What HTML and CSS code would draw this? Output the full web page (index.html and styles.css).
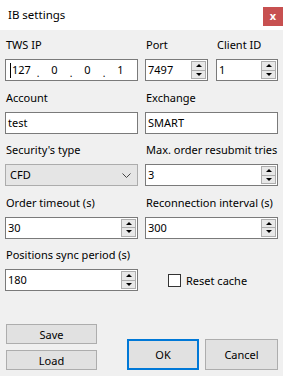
FILE: index.html
```html
<!DOCTYPE html>
<html>
<head>
<meta charset="utf-8">
<link rel="stylesheet" href="styles.css">
</head>
<body>
<div class="window">
  <div class="titlebar">
    <span class="title">IB settings</span>
    <div class="close">x</div>
  </div>
  <div class="form">
    <div class="field">
      <div class="label">TWS IP</div>
      <div class="box ip">
        <span class="caret"></span>
        <span class="oct o1">127</span><span class="dot">.</span>
        <span class="oct">0</span><span class="dot">.</span>
        <span class="oct">0</span><span class="dot">.</span>
        <span class="oct">1</span>
      </div>
    </div>
    <div class="split">
      <div class="field">
        <div class="label">Port</div>
        <div class="box spin"><span class="val">7497</span><span class="spinner"><span class="up"></span><span class="down"></span></span></div>
      </div>
      <div class="field">
        <div class="label">Client ID</div>
        <div class="box spin"><span class="val">1</span><span class="spinner"><span class="up"></span><span class="down"></span></span></div>
      </div>
    </div>
    <div class="field">
      <div class="label">Account</div>
      <div class="box"><span class="val">test</span></div>
    </div>
    <div class="field">
      <div class="label">Exchange</div>
      <div class="box"><span class="val">SMART</span></div>
    </div>
    <div class="field">
      <div class="label">Security's type</div>
      <div class="box select"><span class="val">CFD</span>
        <svg class="chev" width="9" height="5" viewBox="0 0 9 5"><path d="M0.5 0.5 L4.5 4.5 L8.5 0.5" fill="none" stroke="#444" stroke-width="1"/></svg>
      </div>
    </div>
    <div class="field">
      <div class="label">Max. order resubmit tries</div>
      <div class="box spin"><span class="val">3</span><span class="spinner"><span class="up"></span><span class="down"></span></span></div>
    </div>
    <div class="field">
      <div class="label">Order timeout (s)</div>
      <div class="box spin"><span class="val">30</span><span class="spinner"><span class="up"></span><span class="down"></span></span></div>
    </div>
    <div class="field">
      <div class="label">Reconnection interval (s)</div>
      <div class="box spin"><span class="val">300</span><span class="spinner"><span class="up"></span><span class="down"></span></span></div>
    </div>
    <div class="field">
      <div class="label">Positions sync period (s)</div>
      <div class="box spin"><span class="val">180</span><span class="spinner"><span class="up"></span><span class="down"></span></span></div>
    </div>
    <div class="check-cell">
      <span class="checkbox"></span><span class="check-label">Reset cache</span>
    </div>
  </div>
  <div class="footer">
    <div class="left-buttons">
      <div class="btn small">Save</div>
      <div class="btn small">Load</div>
    </div>
    <div class="right-buttons">
      <div class="btn big ok">OK</div>
      <div class="btn big">Cancel</div>
    </div>
  </div>
</div>
</body>
</html>
```
FILE: styles.css
```css
html, body {
  margin: 0;
  padding: 0;
}
body {
  width: 283px;
  height: 376px;
  background: #f0f0f0;
  font-family: "Noto Sans", "Open Sans", sans-serif;
  font-size: 11px;
  color: #000;
  overflow: hidden;
}
.window {
  display: flex;
  flex-direction: column;
  height: 376px;
}
.titlebar {
  height: 30px;
  background: #fff;
  display: flex;
  align-items: flex-start;
  justify-content: space-between;
}
.title {
  margin: 7px 0 0 8px;
  font-size: 11.5px;
  line-height: 16px;
}
.close {
  margin-top: 7px;
  width: 20px;
  height: 19px;
  background: #c75050;
  color: #fff;
  font-weight: bold;
  font-size: 11px;
  line-height: 18px;
  text-align: center;
}
.form {
  display: grid;
  grid-template-columns: 133px 133px;
  column-gap: 7px;
  row-gap: 8.5px;
  padding: 7px 5px 0 5px;
}
.split {
  display: grid;
  grid-template-columns: 63px 62px;
  column-gap: 8px;
}
.label {
  height: 16px;
  line-height: 16px;
  margin: 0 0 6px 1px;
  white-space: nowrap;
}
.box {
  box-sizing: border-box;
  height: 22px;
  border: 1px solid #7a7a7a;
  background: #fff;
  display: flex;
  align-items: center;
  position: relative;
}
.val {
  padding-left: 2px;
  line-height: 16px;
}
.ip {
  padding-left: 4px;
}
.caret {
  width: 1px;
  height: 15px;
  background: #000;
  margin-right: 1px;
}
.oct {
  display: inline-block;
  width: 17px;
  text-align: center;
  line-height: 16px;
}
.oct.o1 {
  width: 18px;
  text-align: left;
}
.dot {
  display: inline-block;
  width: 16px;
  text-align: center;
  line-height: 16px;
  position: relative;
  top: 3px;
  font-size: 10px;
}
.spin .spinner {
  position: absolute;
  right: 1px;
  top: 1px;
  bottom: 1px;
  width: 15px;
  display: flex;
  flex-direction: column;
}
.spinner span {
  flex: 1;
  box-sizing: border-box;
  background: #e8e8e8;
  border: 1px solid #adadad;
  display: flex;
  align-items: center;
  justify-content: center;
}
.spinner .up {
  border-bottom: none;
}
.spinner .up::after {
  content: "";
  border-left: 3px solid transparent;
  border-right: 3px solid transparent;
  border-bottom: 3px solid #000;
}
.spinner .down::after {
  content: "";
  border-left: 3px solid transparent;
  border-right: 3px solid transparent;
  border-top: 3px solid #000;
}
.select {
  background: #e5e5e5;
  border-color: #acacac;
  justify-content: space-between;
}
.select .val {
  padding-left: 4px;
}
.chev {
  margin-right: 6px;
}
.check-cell {
  display: flex;
  align-items: center;
  padding-top: 22px;
  padding-left: 23px;
}
.checkbox {
  box-sizing: border-box;
  width: 13px;
  height: 13px;
  border: 1px solid #333;
  background: #fff;
  margin-right: 5px;
}
.footer {
  display: flex;
  justify-content: space-between;
  align-items: flex-end;
  padding: 0 5px 6px 6px;
  margin-top: auto;
}
.left-buttons {
  display: flex;
  flex-direction: column;
  gap: 6px;
}
.right-buttons {
  display: flex;
  gap: 6px;
}
.btn {
  box-sizing: border-box;
  background: #e1e1e1;
  border: 1px solid #adadad;
  display: flex;
  align-items: center;
  justify-content: center;
}
.btn.small {
  width: 91px;
  height: 20px;
}
.btn.big {
  width: 73px;
  height: 31px;
}
.btn.ok {
  width: 72px;
  border: 2px solid #0078d7;
}
```
